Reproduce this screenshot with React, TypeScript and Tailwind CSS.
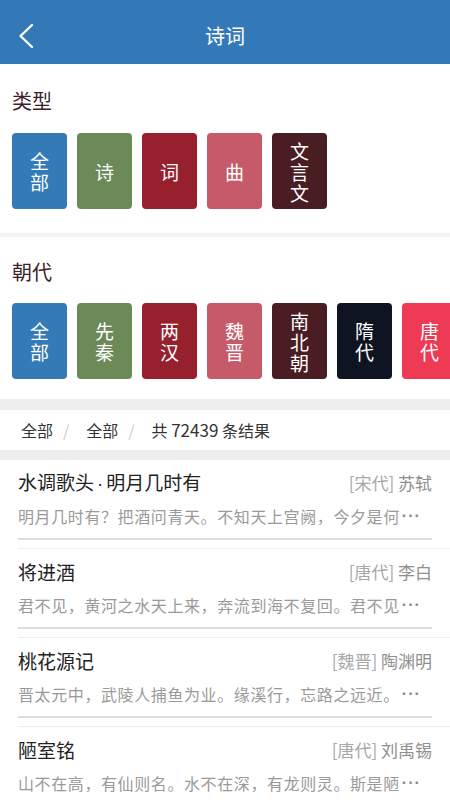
import React from "react";

const font = { fontFamily: '"Noto Sans CJK SC", "Noto Sans", sans-serif' };
const latin = { fontFamily: '"Liberation Sans", Arial, sans-serif' };

type Btn = { label: string; bg: string };

const types: Btn[] = [
  { label: "全部", bg: "bg-[#337ab7]" },
  { label: "诗", bg: "bg-[#6b8a57]" },
  { label: "词", bg: "bg-[#97202d]" },
  { label: "曲", bg: "bg-[#c55b68]" },
  { label: "文言文", bg: "bg-[#4a1d23]" },
];

const dynasties: Btn[] = [
  { label: "全部", bg: "bg-[#337ab7]" },
  { label: "先秦", bg: "bg-[#6b8a57]" },
  { label: "两汉", bg: "bg-[#97202d]" },
  { label: "魏晋", bg: "bg-[#c55b68]" },
  { label: "南北朝", bg: "bg-[#4a1d23]" },
  { label: "隋代", bg: "bg-[#0e1421]" },
  { label: "唐代", bg: "bg-[#ee3a55]" },
];

const poems = [
  { title: ["水调歌头", "明月几时有"], dyn: "宋代", author: "苏轼", text: "明月几时有？把酒问青天。不知天上宫阙，今夕是何" },
  { title: ["将进酒"], dyn: "唐代", author: "李白", text: "君不见，黄河之水天上来，奔流到海不复回。君不见" },
  { title: ["桃花源记"], dyn: "魏晋", author: "陶渊明", text: "晋太元中，武陵人捕鱼为业。缘溪行，忘路之远近。" },
  { title: ["陋室铭"], dyn: "唐代", author: "刘禹锡", text: "山不在高，有仙则名。水不在深，有龙则灵。斯是陋" },
];

function Tile({ b }: { b: Btn }) {
  return (
    <div
      className={`${b.bg} shrink-0 w-[55px] h-[76px] rounded-[4px] flex flex-col items-center justify-center text-white text-[19px] leading-[21px]`}
    >
      {b.label.split("").map((c, i) => (
        <span key={i}>{c}</span>
      ))}
    </div>
  );
}

export default function App() {
  return (
    <div lang="zh-CN" className="w-[450px] h-[800px] overflow-hidden bg-white" style={font}>
      {/* Header */}
      <div className="h-[64px] bg-[#3479b7] flex items-center relative">
        <svg className="absolute left-[17px] top-[23px]" width="18" height="26" viewBox="0 0 18 26" fill="none">
          <path d="M15 2 L3.5 13 L15 24" stroke="white" strokeWidth="2.4" strokeLinecap="round" strokeLinejoin="round" />
        </svg>
        <div className="flex-1 text-center text-white text-[20px] leading-[28px] pt-[8px]">诗词</div>
      </div>

      {/* Type section */}
      <div className="pt-[23px] pb-[24px]">
        <div className="px-[12px] text-[20px] leading-[28px] text-[#3d1f2b]">类型</div>
        <div className="flex gap-[10px] px-[12px] mt-[18px]">
          {types.map((b) => (
            <Tile key={b.label} b={b} />
          ))}
        </div>
      </div>
      <div className="h-[4px] bg-[#f2f2f2]" />

      {/* Dynasty section */}
      <div className="pt-[21px] pb-[20px]">
        <div className="px-[12px] text-[20px] leading-[28px] text-[#3d1f2b]">朝代</div>
        <div className="flex gap-[10px] px-[12px] mt-[17px] overflow-hidden">
          {dynasties.map((b) => (
            <Tile key={b.label} b={b} />
          ))}
        </div>
      </div>
      <div className="h-[11px] bg-[#eeeeee]" />

      {/* Breadcrumb */}
      <div className="h-[40px] flex items-center pl-[21px] text-[16px] text-[#333]">
        <span>全部</span>
        <span className="ml-[10px] mr-[17px] text-[#cccccc]">/</span>
        <span>全部</span>
        <span className="ml-[10px] mr-[17px] text-[#cccccc]">/</span>
        <span>
          共 <span className="text-[17px]">72439</span> 条结果
        </span>
      </div>
      <div className="h-[10px] bg-[#eeeeee]" />

      {/* List */}
      <div>
        {poems.map((p) => (
          <div key={p.author} className="ml-[18px] border-b border-[#eeeeee] pt-[10px] pb-[8px]">
            <div className="mr-[18px] border-b-2 border-[#dddddd] pb-[10px]">
              <div className="h-[26px] flex items-center justify-between">
                <span className="text-[19px] leading-[26px] text-[#222]">
                  {p.title[0]}
                  {p.title.length > 1 && (
                    <>
                      <span style={latin} className="mx-[3px]">·</span>
                      {p.title[1]}
                    </>
                  )}
                </span>
                <span className="text-[17px] leading-[26px] text-[#8f8f8f]">
                  <span className="text-[#a8a8a8]">[{p.dyn}]</span> {p.author}
                </span>
              </div>
              <div className="mt-[8px] h-[24px] flex items-center whitespace-nowrap overflow-hidden text-[16px] leading-[24px] text-[#9a9a9a]">
                <span className="tracking-[0.6px]">{p.text}</span>
                <span style={latin} className="ml-[2px] text-[#8a8a8a] tracking-[1px] font-bold">···</span>
              </div>
            </div>
          </div>
        ))}
      </div>
    </div>
  );
}
